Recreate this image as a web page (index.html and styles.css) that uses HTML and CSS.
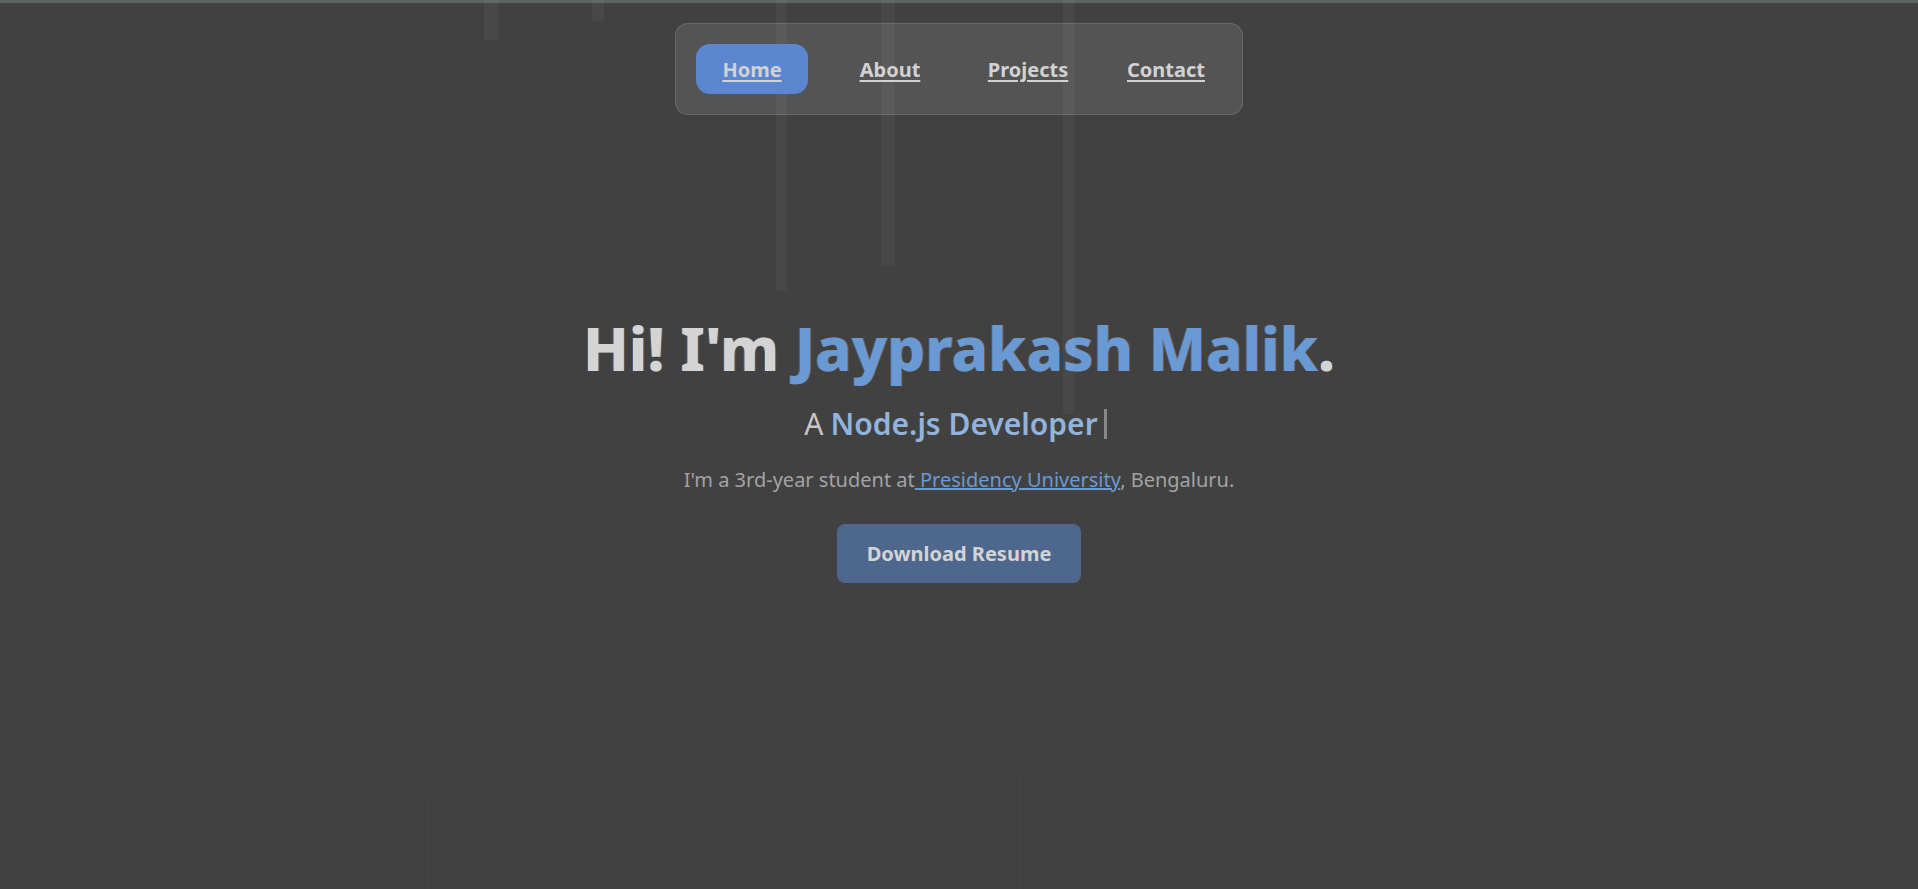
FILE: index.html
```html
<!DOCTYPE html>
<html lang="en">
<head>
<meta charset="utf-8">
<title>Jayprakash Malik</title>
<link rel="stylesheet" href="styles.css">
</head>
<body>
<div class="topbar"></div>
<div class="rain" aria-hidden="true">
  <span class="drop d1"></span>
  <span class="drop d2"></span>
  <span class="drop d3"></span>
  <span class="drop d4"></span>
  <span class="drop d5"></span>
  <span class="thread t1"></span>
  <span class="thread t2"></span>
</div>
<nav class="nav">
  <a class="nav-link active" href="#">Home</a>
  <a class="nav-link" href="#">About</a>
  <a class="nav-link" href="#">Projects</a>
  <a class="nav-link" href="#">Contact</a>
</nav>
<main class="hero">
  <h1 class="title">Hi! I'm <span class="name">Jayprakash Malik</span>.</h1>
  <h2 class="role">A <span class="role-name">Node.js Developer</span><span class="cursor"></span></h2>
  <p class="intro">I'm a 3rd-year student at<a class="uni" href="#"> Presidency University</a>, Bengaluru.</p>
  <a class="btn" href="#">Download Resume</a>
</main>
</body>
</html>
```
FILE: styles.css
```css
* { box-sizing: border-box; }
html, body { margin: 0; height: 100%; }
body {
  background: #414141;
  font-family: "Noto Sans", "Open Sans", sans-serif;
  overflow: hidden;
  position: relative;
}
.topbar {
  height: 3px;
  background: #5b6462;
}
.rain { position: absolute; inset: 0; pointer-events: none; }
.drop {
  position: absolute;
  top: 0;
  background: rgba(255, 255, 255, 0.04);
}
.d1 { left: 484px; width: 14px; height: 40px; }
.d2 { left: 592px; width: 12px; height: 21px; }
.d3 { left: 776px; width: 11px; height: 291px; }
.d4 { left: 881px; width: 14px; height: 266px; }
.d5 { left: 1063px; width: 11px; height: 414px; }
.thread {
  position: absolute;
  bottom: 0;
  width: 1px;
  background: rgba(255, 255, 255, 0.025);
}
.t1 { left: 427px; height: 89px; }
.t2 { left: 1019px; height: 116px; }

.nav {
  position: absolute;
  top: 23px;
  left: 50%;
  transform: translateX(-50%);
  display: flex;
  gap: 26px;
  padding: 20px;
  background: rgba(255, 255, 255, 0.1);
  border: 1px solid rgba(255, 255, 255, 0.12);
  border-radius: 13px;
}
.nav-link {
  width: 112px;
  height: 50px;
  display: flex;
  align-items: center;
  justify-content: center;
  border-radius: 14px;
  color: #d2d2d2;
  font-weight: 700;
  font-size: 20px;
  text-decoration: underline;
  text-decoration-thickness: 1.5px;
  text-underline-offset: 3px;
}
.nav-link.active { background: #5b87d1; }

.hero {
  display: flex;
  flex-direction: column;
  align-items: center;
  padding-top: 309px;
  text-align: center;
}
.title {
  margin: 0;
  font-size: 60px;
  line-height: 72px;
  font-weight: 800;
  color: #d4d4d4;
  text-shadow: -1px 0 rgba(90, 150, 255, 0.35), 1px 0 rgba(255, 150, 60, 0.3);
}
.name { color: #6a9ad3; }
.role {
  margin: 22px 0 0;
  font-size: 30px;
  line-height: 36px;
  font-weight: 400;
  color: #c6c6c6;
  display: flex;
  align-items: center;
  gap: 8px;
}
.role-name { color: #91b3dc; margin-left: -1px; font-weight: 600; }
.cursor {
  display: inline-block;
  width: 3px;
  height: 30px;
  background: #888;
  margin-left: -2px;
  margin-right: 7px;
}
.intro {
  margin: 24px 0 0;
  font-size: 20px;
  line-height: 28px;
  color: #a3a3a3;
}
.uni { color: #6a9ad3; text-decoration: underline; }
.btn {
  margin-top: 30px;
  display: inline-block;
  padding: 16px 30px;
  background: #4d678d;
  color: #d4d4d4;
  font-weight: 700;
  font-size: 20px;
  line-height: 27px;
  border-radius: 8px;
  text-decoration: none;
}
```
